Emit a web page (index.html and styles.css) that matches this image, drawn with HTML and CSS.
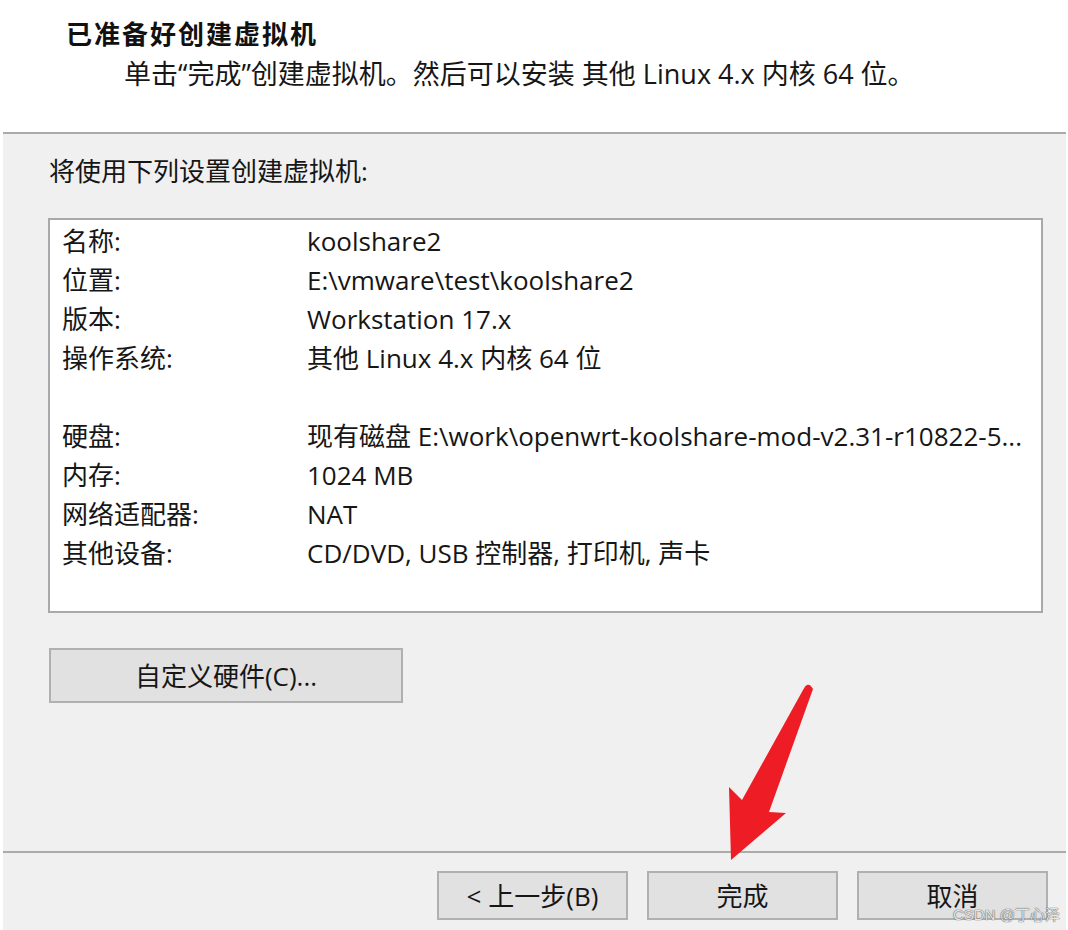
FILE: index.html
```html
<!DOCTYPE html>
<html lang="zh-CN">
<head>
<meta charset="utf-8">
<title>新建虚拟机向导</title>
<link rel="stylesheet" href="styles.css">
</head>
<body>
<div class="page">
  <header class="header">
    <h1 class="title">已准备好创建虚拟机</h1>
    <p class="desc">单击“完成”创建虚拟机。然后可以安装 其他 Linux 4.x 内核 64 位。</p>
  </header>
  <main class="panel">
    <p class="lead">将使用下列设置创建虚拟机:</p>
    <div class="summary">
      <div class="row"><span class="k">名称:</span><span class="v">koolshare2</span></div>
      <div class="row"><span class="k">位置:</span><span class="v">E:\vmware\test\koolshare2</span></div>
      <div class="row"><span class="k">版本:</span><span class="v">Workstation 17.x</span></div>
      <div class="row"><span class="k">操作系统:</span><span class="v">其他 Linux 4.x 内核 64 位</span></div>
      <div class="row"></div>
      <div class="row"><span class="k">硬盘:</span><span class="v">现有磁盘 E:\work\openwrt-koolshare-mod-v2.31-r10822-5...</span></div>
      <div class="row"><span class="k">内存:</span><span class="v">1024 MB</span></div>
      <div class="row"><span class="k">网络适配器:</span><span class="v">NAT</span></div>
      <div class="row"><span class="k">其他设备:</span><span class="v">CD/DVD, USB 控制器, 打印机, 声卡</span></div>
    </div>
    <button class="btn btn-custom">自定义硬件(C)...</button>
  </main>
  <footer class="footer">
    <button class="btn btn-nav">&lt; 上一步(B)</button>
    <button class="btn btn-nav">完成</button>
    <button class="btn btn-nav">取消</button>
  </footer>
  <svg class="arrow" width="100" height="195" viewBox="0 0 100 195" aria-hidden="true">
    <path d="M83,15 Q88,5 93,14 L49,137 L66,138 L11,185 L9,112 L22,125 Z" fill="#ee1c25"/>
  </svg>
  <div class="watermark">CSDN @丁心泽</div>
</div>
</body>
</html>
```

FILE: styles.css
```css
html, body {
  margin: 0;
  padding: 0;
}

body {
  background: #ffffff;
  font-family: "Open Sans", "Noto Sans CJK SC", sans-serif;
  color: #161616;
  width: 1068px;
  height: 930px;
  overflow: hidden;
}

.page {
  position: relative;
  width: 1068px;
  height: 930px;
}

.header {
  height: 132px;
  box-sizing: border-box;
  padding: 19px 0 0 66px;
}

.title {
  margin: 0;
  font-size: 26px;
  font-weight: 700;
  line-height: 30px;
  letter-spacing: 2px;
  color: #111;
}

.desc {
  margin: 10px 0 0 58px;
  font-size: 27px;
  line-height: 30px;
}

.panel {
  margin: 0 2px 0 3px;
  height: 719px;
  box-sizing: border-box;
  border-top: 2px solid #ababab;
  background: #f0f0f0;
  padding: 22px 0 0 45px;
}

.lead {
  margin: 0 0 0 1px;
  font-size: 26px;
  line-height: 30px;
}

.summary {
  margin-top: 32px;
  width: 995px;
  height: 395px;
  box-sizing: border-box;
  border: 2px solid #a7a9ad;
  background: #ffffff;
  padding: 2px 14px 0 12px;
}

.row {
  display: grid;
  grid-template-columns: 245px 1fr;
  height: 39px;
  align-items: center;
  font-size: 26px;
  line-height: 39px;
  white-space: nowrap;
}

.v {
  overflow: hidden;
}

.btn {
  font-family: "Open Sans", "Noto Sans CJK SC", sans-serif;
  font-size: 26px;
  line-height: 26px;
  color: #161616;
  background: #e1e1e1;
  border: 2px solid #b0b0b0;
  padding: 0;
  margin: 0;
  box-sizing: border-box;
}

.btn-custom {
  display: block;
  margin: 35px 0 0 1px;
  width: 354px;
  height: 55px;
}

.footer {
  margin: 0 2px 0 3px;
  height: 79px;
  box-sizing: border-box;
  border-top: 2px solid #ababab;
  background: #f0f0f0;
  display: flex;
  justify-content: flex-end;
  gap: 19px;
  padding: 18px 18px 0 0;
}

.btn-nav {
  width: 191px;
  height: 49px;
}

.arrow {
  position: absolute;
  left: 720px;
  top: 675px;
}

.watermark {
  position: absolute;
  left: 953px;
  top: 907px;
  font-family: "Liberation Sans", "Noto Sans CJK SC", sans-serif;
  font-size: 15px;
  line-height: 16px;
  color: #e6e6e6;
  text-shadow: 0 0 1px #555, 0 0 1px #555;
}
```
